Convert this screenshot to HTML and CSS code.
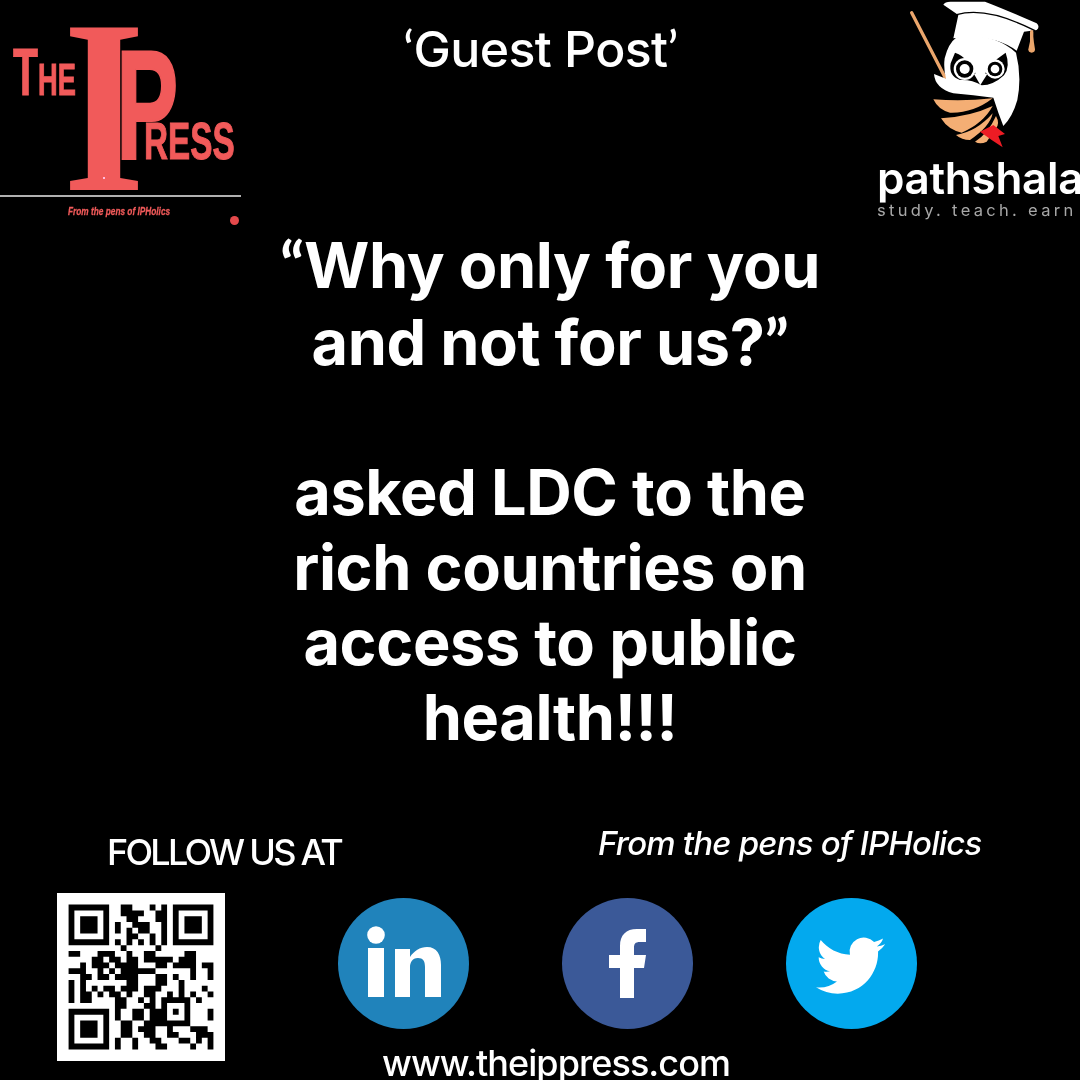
FILE: index.html
```html
<!DOCTYPE html>
<html lang="en">
<head>
<meta charset="utf-8">
<title>Guest Post - The IP Press</title>
<link rel="stylesheet" href="styles.css">
</head>
<body>
<main class="poster">
  <header class="top">
    <div class="ip-logo">
      <span class="ip-the"><span class="ip-t">T</span><span class="ip-he">HE</span></span>
      <span class="ip-i">I</span>
      <span class="ip-p">P</span>
      <span class="ip-ress">RESS</span>
      <i class="ip-speck"></i>
      <div class="ip-rule"></div>
      <span class="ip-tag">From the pens of IPHolics</span>
      <i class="ip-reg"></i>
    </div>
    <h2 class="guest"><span class="qm">‘</span>Guest Post<span class="qm">’</span></h2>
    <div class="ps-logo">
      <svg class="owl" viewBox="0 0 660 450" aria-hidden="true">
        <path d="M155 38L255 232" stroke="#eba66c" stroke-width="10" stroke-linecap="round" fill="none"/>
        <path d="M250 14Q255 4 275 5L375 5Q440 30 530 70Q541 80 530 90L492 95L470 152Q400 100 280 115L295 45Z" fill="#fff"/>
        <path d="M290 44Q380 18 525 92" stroke="#000" stroke-width="4" fill="none"/>
        <path d="M515 95V150" stroke="#eba66c" stroke-width="10" stroke-linecap="round" fill="none"/>
        <path d="M513 110h6l6 38a9 9 0 0 1-20 0Z" fill="#eba66c"/>
        <path d="M290 112Q400 96 468 158Q486 230 472 300Q458 350 430 378Q415 340 400 293Q340 285 280 280Q225 265 222 222L258 236Q250 205 254 175Q265 130 290 112Z" fill="#fff"/>
        <path d="M285 158Q330 172 360 250Q385 190 437 158Q452 200 432 226Q400 256 365 256Q335 238 300 240Q265 228 272 190Z" fill="#000"/>
        <circle cx="314" cy="207" r="33" fill="#fff"/><circle cx="314" cy="207" r="26" fill="#000"/><circle cx="314" cy="207" r="15" fill="#fff"/>
        <circle cx="405" cy="207" r="29" fill="#fff"/><circle cx="405" cy="207" r="22" fill="#000"/><circle cx="405" cy="207" r="13" fill="#fff"/>
        <path d="M342 222Q360 215 382 222L361 255Z" fill="#fff"/>
        <path d="M220 298Q310 305 398 295Q340 340 270 338Q235 330 220 298Z" fill="#f4ae74"/>
        <path d="M243 355Q330 350 398 318Q370 370 305 398Q265 390 243 355Z" fill="#f4ae74"/>
        <path d="M288 405Q350 395 398 340Q390 380 330 420Q305 420 288 405Z" fill="#f4ae74"/>
        <path d="M345 425Q385 400 408 348Q420 370 408 385L380 425Q360 435 345 425Z" fill="#f4ae74"/>
        <path d="M360 395L400 375L435 402L415 408L428 442L395 420Z" fill="#ed1c24"/>
      </svg>
      <div class="ps-name">pathshala</div>
      <div class="ps-sub">study. teach. earn</div>
    </div>
  </header>

  <section class="headline">
    <p><span class="qm">“</span>Why only for you<br>and not for us?<span class="qm">”</span></p>
    <p>asked LDC to the<br>rich countries on<br>access to public<br>health!!!</p>
  </section>

  <footer class="bottom">
    <div class="follow">
      <div class="follow-label">FOLLOW US AT</div>
      <svg class="qr" viewBox="-2 -2 29 29" aria-label="QR code">
        <rect x="-2" y="-2" width="29" height="29" fill="#fff"/>
        <path stroke="#000" fill="none" stroke-width="1" d="M0 .5h7M9 .5h2M14 .5h1M16 .5h1M18 .5h7
M0 1.5h1M6 1.5h1M9 1.5h4M15 1.5h2M18 1.5h1M24 1.5h1
M0 2.5h1M2 2.5h3M6 2.5h1M10 2.5h2M15 2.5h2M18 2.5h1M20 2.5h3M24 2.5h1
M0 3.5h1M2 3.5h3M6 3.5h1M8 3.5h1M11 3.5h3M16 3.5h1M18 3.5h1M20 3.5h3M24 3.5h1
M0 4.5h1M2 4.5h3M6 4.5h1M8 4.5h1M10 4.5h1M12 4.5h2M16 4.5h1M18 4.5h1M20 4.5h3M24 4.5h1
M0 5.5h1M6 5.5h1M10 5.5h2M14 5.5h1M16 5.5h1M18 5.5h1M24 5.5h1
M0 6.5h7M8 6.5h1M10 6.5h1M12 6.5h1M14 6.5h1M16 6.5h1M18 6.5h7
M9 7.5h1M15 7.5h1
M0 8.5h2M5 8.5h3M10 8.5h1M13 8.5h2M20 8.5h2
M4 9.5h2M7 9.5h2M10 9.5h2M13 9.5h5M19 9.5h3
M2 10.5h1M4 10.5h3M8 10.5h4M15 10.5h2M18 10.5h4M23 10.5h2
M0 11.5h3M5 11.5h1M7 11.5h1M9 11.5h6M21 11.5h1M24 11.5h1
M2 12.5h2M5 12.5h2M8 12.5h4M15 12.5h2M18 12.5h1M21 12.5h1M24 12.5h1
M0 13.5h1M2 13.5h1M10 13.5h2M15 13.5h2M19 13.5h1
M0 14.5h1M2 14.5h1M4 14.5h1M6 14.5h2M9 14.5h3M13 14.5h3M19 14.5h1M23 14.5h1
M0 15.5h1M2 15.5h2M5 15.5h1M7 15.5h2M10 15.5h1M13 15.5h2M17 15.5h1M19 15.5h1M21 15.5h1M24 15.5h1
M0 16.5h1M2 16.5h2M8 16.5h2M12 16.5h1M14 16.5h1M16 16.5h5M22 16.5h1
M8 17.5h2M13 17.5h2M16 17.5h1M20 17.5h1
M0 18.5h7M8 18.5h1M11 18.5h2M14 18.5h3M18 18.5h1M20 18.5h1M24 18.5h1
M0 19.5h1M6 19.5h1M8 19.5h1M11 19.5h2M14 19.5h3M20 19.5h1M24 19.5h1
M0 20.5h1M2 20.5h3M6 20.5h1M9 20.5h2M13 20.5h8
M0 21.5h1M2 21.5h3M6 21.5h1M9 21.5h2M12 21.5h3M17 21.5h1M21 21.5h3
M0 22.5h1M2 22.5h3M6 22.5h1M9 22.5h2M13 22.5h2M17 22.5h2M22 22.5h3
M0 23.5h1M6 23.5h1M8 23.5h1M11 23.5h1M14 23.5h2M19 23.5h2M22 23.5h1M24 23.5h1
M0 24.5h7M8 24.5h1M11 24.5h1M15 24.5h2M21 24.5h1M24 24.5h1"/>
      </svg>
    </div>
    <div class="social">
      <div class="social-tag">From the pens of IPHolics</div>
      <div class="social-icons">
        <svg class="icon" viewBox="0 0 131 131" aria-label="LinkedIn">
          <circle cx="65.5" cy="65.5" r="65.5" fill="#2083bb"/>
          <circle cx="38" cy="37" r="8.8" fill="#fff"/>
          <path d="M30 50h16v49H30ZM57 51h15v8c4-6 10-10 17-10 10 0 14 8 14 18v32H87V69c0-6-2-9-7-9-6 0-8 5-8 9v30H57Z" fill="#fff"/>
        </svg>
        <svg class="icon" viewBox="0 0 131 131" aria-label="Facebook">
          <circle cx="65.5" cy="65.5" r="65.5" fill="#3b5998"/>
          <path d="M58 100V70H47V57H58V48C58 37 64 31 75 31H84V44H78C73 44 72 46 72 50V57H84L82 70H72V100Z" fill="#fff"/>
        </svg>
        <svg class="icon" viewBox="0 0 131 131" aria-label="Twitter">
          <circle cx="65.5" cy="65.5" r="65.5" fill="#03a9ee"/>
          <g transform="translate(30 33) scale(2.88)"><path fill="#fff" d="M23.953 4.57a10 10 0 01-2.825.775 4.958 4.958 0 002.163-2.723c-.951.555-2.005.959-3.127 1.184a4.92 4.92 0 00-8.384 4.482C7.69 8.095 4.067 6.13 1.64 3.162a4.822 4.822 0 00-.666 2.475c0 1.71.87 3.213 2.188 4.096a4.904 4.904 0 01-2.228-.616v.06a4.923 4.923 0 003.946 4.827 4.996 4.996 0 01-2.212.085 4.936 4.936 0 004.604 3.417 9.867 9.867 0 01-6.102 2.105c-.39 0-.779-.023-1.17-.067a13.995 13.995 0 007.557 2.209c9.053 0 13.998-7.496 13.998-13.985 0-.21 0-.42-.015-.63A9.935 9.935 0 0024 4.59z"/></g>
        </svg>
      </div>
      <div class="social-url">www.theippress.com</div>
    </div>
  </footer>
</main>
</body>
</html>
```
FILE: styles.css
```css
* { box-sizing: border-box; }
html, body { margin: 0; background: #000; }
.poster {
  width: 1080px; height: 1080px; background: #000; color: #fff; overflow: hidden;
  display: flex; flex-direction: column; font-family: Inter, "Noto Sans", sans-serif;
  filter: blur(.6px);
}
.qm { font-family: Lato, sans-serif; }
.top { display: grid; grid-template-columns: 260px 1fr 203px; height: 226px; flex: none; }
.ip-logo { position: relative; color: #f15a5a; font-family: "Liberation Sans", sans-serif; font-weight: 700; }
.ip-logo span { position: absolute; line-height: 1; white-space: nowrap; transform-origin: 0 0; }
.ip-the { left: 13px; top: 39px; transform: scaleX(.62); -webkit-text-stroke: 1px #f15a5a; }
.ip-t { position: static !important; font-size: 66px; }
.ip-he { position: static !important; font-size: 44px; }
.ip-i { left: 63px; top: -17px; font-family: "Liberation Serif", serif; font-size: 248px; font-weight: 700; transform: scaleX(.85); }
.ip-p { left: 116px; top: 27px; font-size: 156px; transform: scaleX(.6); -webkit-text-stroke: 2px #f15a5a; }
.ip-ress { left: 144px; top: 115px; font-size: 52px; transform: scaleX(.64); -webkit-text-stroke: 1px #f15a5a; }
.ip-speck { position: absolute; left: 103px; top: 177px; width: 2px; height: 2px; background: #fbd; }
.ip-rule { position: absolute; left: 0; top: 195px; width: 241px; height: 2px; background: #b0b0b0; }
.ip-tag { left: 68px; top: 206px; font-size: 11.5px; font-style: italic; transform: scaleX(.72); -webkit-text-stroke: .3px #f15a5a; }
.ip-reg { position: absolute; left: 230px; top: 216px; width: 9px; height: 9px; border-radius: 50%; background: #e4494b; }
.guest { margin: 20px 56px 0 0; text-align: center; font-size: 50px; line-height: 56px; font-weight: 500; letter-spacing: -.6px; }
.ps-logo { min-width: 0; white-space: nowrap; display: flex; flex-direction: column; }
.owl { width: 220px; height: 150px; margin-left: -17px; display: block; flex: none; }
.ps-name { font-size: 44px; line-height: 49px; font-weight: 600; margin-top: 4px; letter-spacing: -.3px; }
.ps-sub { font-size: 16.5px; line-height: 15px; letter-spacing: 3.3px; color: #a8a8a8; }
.headline { flex: none; text-align: center; font-size: 63px; line-height: 75px; font-weight: 650; width: 1100px; letter-spacing: -.4px; }
.headline p { margin: 0 0 75px; }
.headline p:last-child { margin: 0; }
.bottom { margin-top: auto; height: 252px; flex: none; display: flex; }
.follow { width: 338px; padding-left: 57px; flex: none; }
.follow-label { margin: 0 0 17px 50px; font-size: 36px; line-height: 48px; font-weight: 500; letter-spacing: -2.75px; white-space: nowrap; }
.qr { width: 168px; height: 168px; display: block; }
.social { flex: 1; min-width: 0; }
.social-tag { margin-left: 260px; font-size: 33px; line-height: 30px; font-style: italic; font-weight: 500; letter-spacing: -.8px; white-space: nowrap; }
.social-icons { display: flex; gap: 93px; margin-top: 40px; }
.icon { width: 131px; height: 131px; display: block; }
.social-url { margin: 12px 0 0 44px; font-size: 36px; line-height: 44px; font-weight: 500; letter-spacing: -.95px; white-space: nowrap; }
```
